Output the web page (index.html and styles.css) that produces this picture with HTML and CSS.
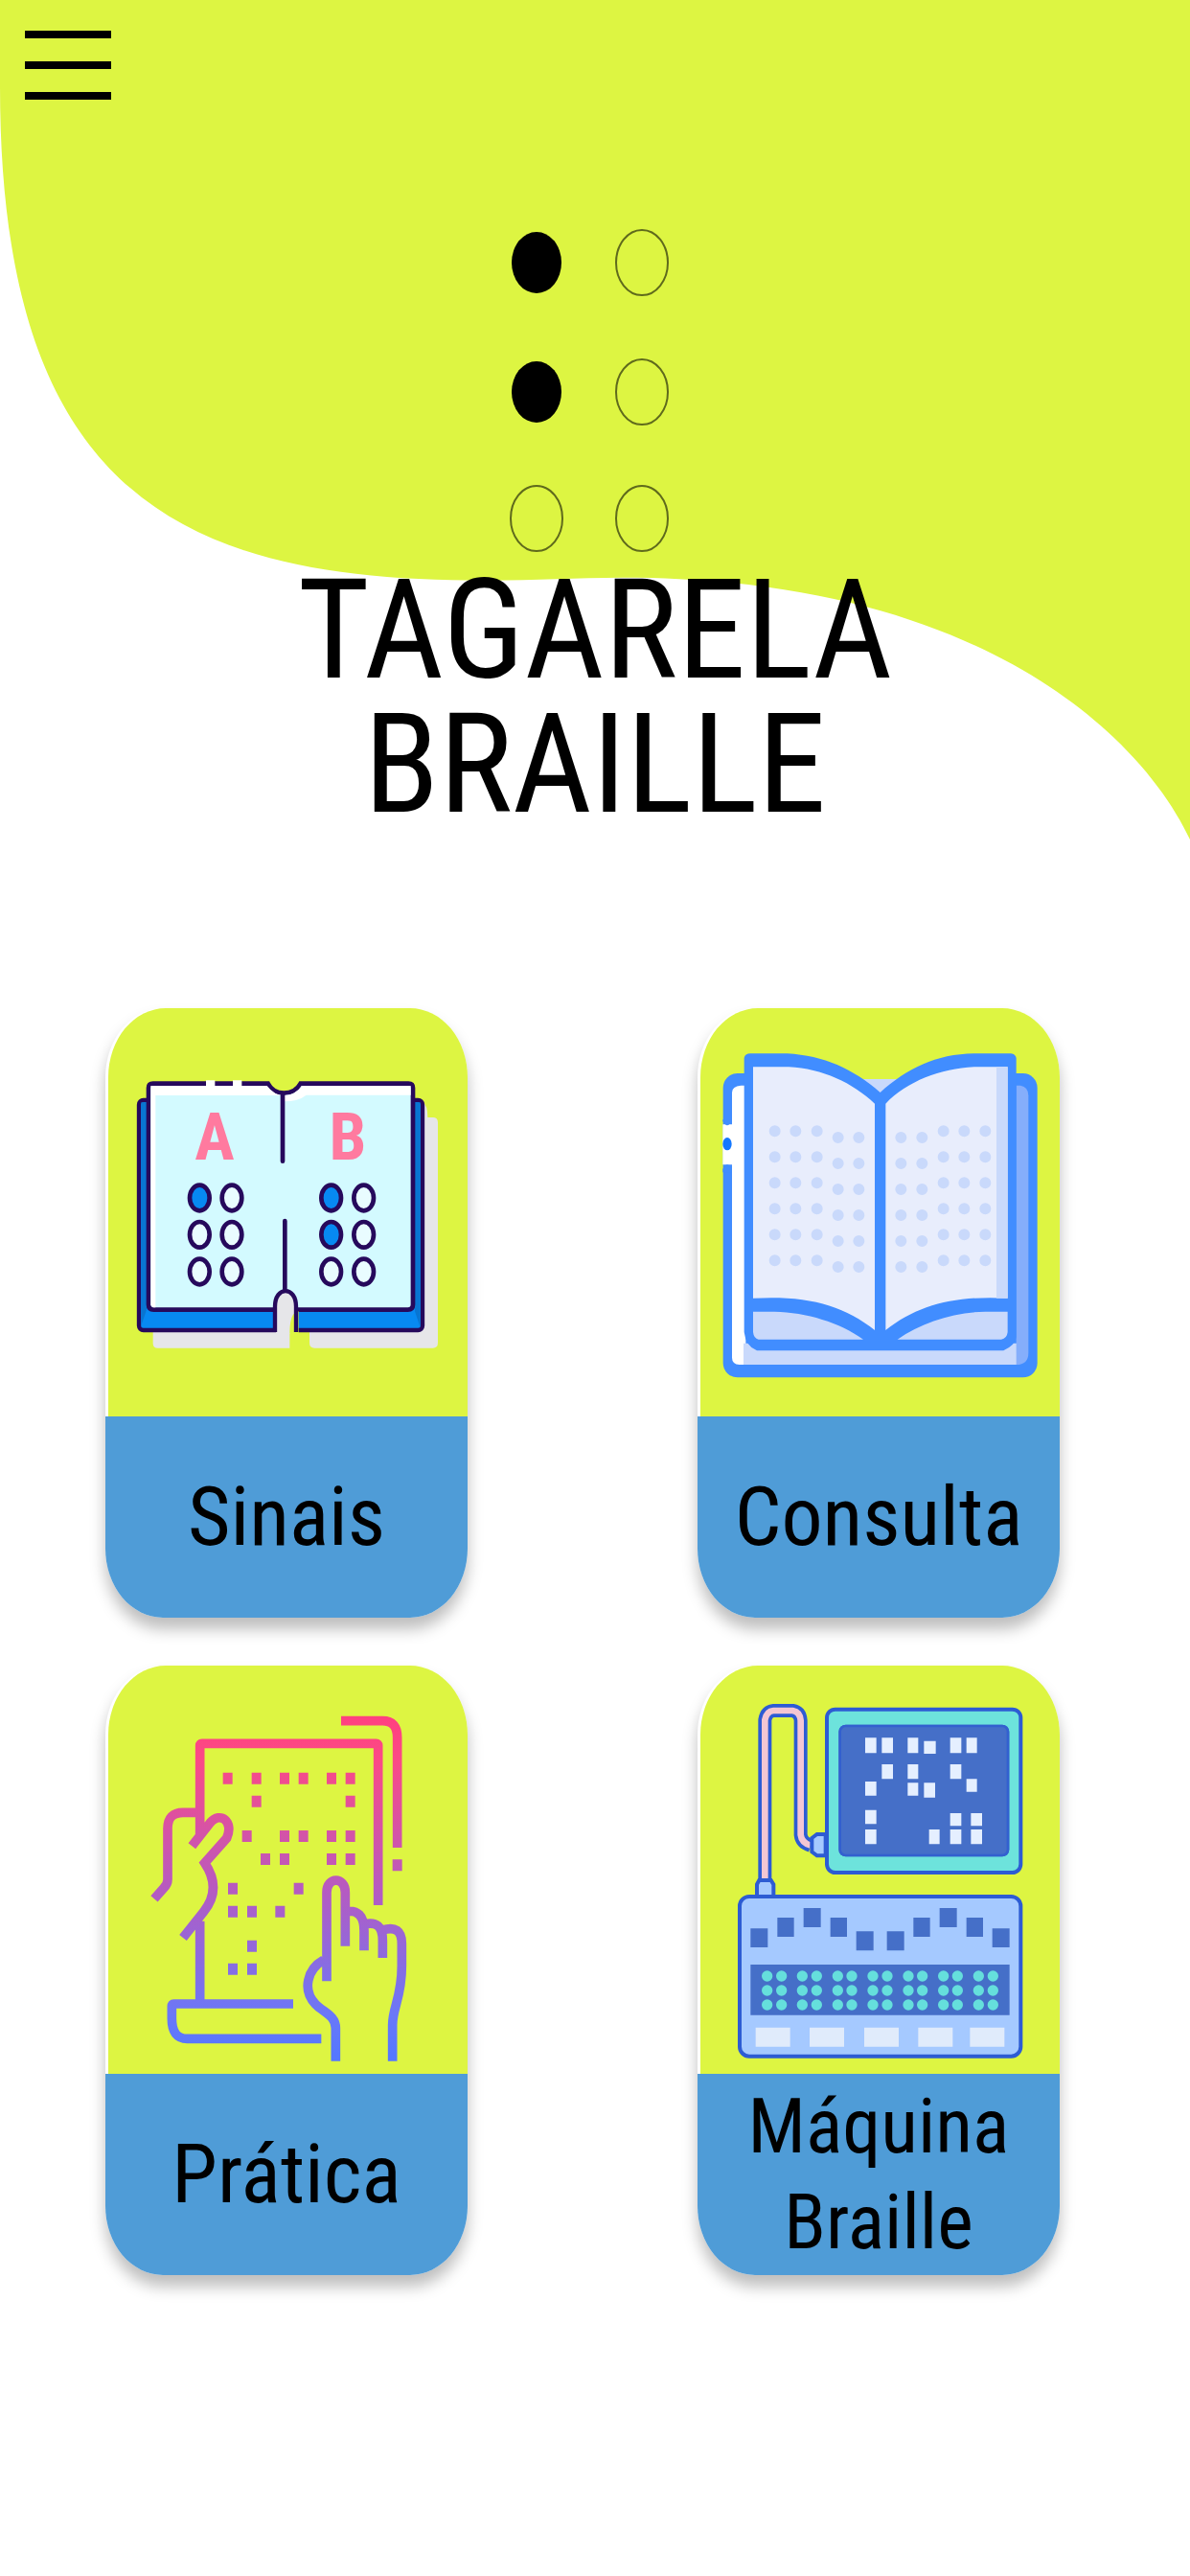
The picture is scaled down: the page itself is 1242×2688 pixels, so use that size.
FILE: index.html
```html
<!DOCTYPE html>
<html lang="pt-BR">
<head>
<meta charset="utf-8">
<meta name="viewport" content="width=device-width, initial-scale=1">
<title>Tagarela Braille</title>
<link rel="stylesheet" href="styles.css">
</head>
<body>
<header class="hero">
  <svg class="hero-shape" viewBox="0 0 1242 875" preserveAspectRatio="none" aria-hidden="true">
    <path fill="#ddf542" d="M0 0H1242V875C1190 765 1020 602 650 602C600 602 560 605 507 605C200 605 0 525 0 90Z"/>
  </svg>
  <div class="hero-content">
    <button class="menu" type="button" aria-label="Menu">
      <span class="menu-line"></span>
      <span class="menu-line"></span>
      <span class="menu-line"></span>
    </button>
    <svg class="cell" viewBox="0 0 166 338" aria-hidden="true">
      <g fill="#000"><ellipse cx="28" cy="36" rx="26" ry="32"/><ellipse cx="28" cy="171" rx="26" ry="32"/></g>
      <g fill="none" stroke="#5f6a1c" stroke-width="2"><ellipse cx="138" cy="36" rx="27" ry="34"/><ellipse cx="138" cy="171" rx="27" ry="34"/><ellipse cx="28" cy="303" rx="27" ry="34"/><ellipse cx="138" cy="303" rx="27" ry="34"/></g>
    </svg>
    <h1 class="title"><span class="title-line">TAGARELA</span> <span class="title-line">BRAILLE</span></h1>
  </div>
</header>
<main class="cards">
  <a class="card" href="#sinais">
    <span class="card-art">
      <svg viewBox="40 36 1125 1278" aria-hidden="true">
        <path fill="#e6e6e9" d="M180 1030H608V1100H195Q180 1100 180 1085ZM670 1030H1025V330Q1040 340 1040 378H1056Q1072 378 1072 394V1084Q1072 1100 1056 1100H686Q670 1100 670 1084Z"/>
        <rect x="136" y="324" width="888" height="720" rx="14" fill="#0789f2" stroke="#26095c" stroke-width="13"/>
        <path fill="#0875d2" d="M143 331H160V980L143 1030ZM1000 331H1017V1036L1000 985Z"/>
        <path fill="#d3faff" stroke="#26095c" stroke-width="14" d="M166 286Q166 272 180 272H540C560 312 620 312 642 272H980Q994 272 994 286V964Q994 980 978 980H182Q166 980 166 964Z"/>
        <path fill="#fff" d="M173 279H537Q560 309 590 309H188V973H180L173 965ZM590 309Q625 309 646 279H987V308H660Q635 328 590 328Z"/>
        <path fill="#fff" d="M346 262H374V285H346ZM430 262H458V285H430Z"/>
        <path fill="#ddf542" d="M565 1054V985H636V1054Z"/>
        <path fill="#e6e6e9" d="M565 1056V960C565 910 625 910 625 960V990Q608 1000 608 1056Z"/>
        <path fill="none" stroke="#26095c" stroke-width="13" d="M562 1050V970C562 905 628 905 628 970V1050"/>
        <path fill="none" stroke="#26095c" stroke-width="14" stroke-linecap="round" d="M586 305V515M593 702V915"/>
        <text class="book-letter" x="373" y="510">A</text>
        <text class="book-letter" x="790" y="510">B</text>
        <g fill="#e9fcff" stroke="#26095c" stroke-width="14">
          <ellipse cx="427" cy="630" rx="31" ry="40"/><ellipse cx="326" cy="745" rx="31" ry="40"/><ellipse cx="427" cy="745" rx="31" ry="40"/><ellipse cx="326" cy="861" rx="31" ry="40"/><ellipse cx="427" cy="861" rx="31" ry="40"/>
          <ellipse cx="840" cy="630" rx="31" ry="40"/><ellipse cx="840" cy="745" rx="31" ry="40"/><ellipse cx="738" cy="861" rx="31" ry="40"/><ellipse cx="840" cy="861" rx="31" ry="40"/>
        </g>
        <g fill="#0789f2" stroke="#26095c" stroke-width="14">
          <ellipse cx="326" cy="630" rx="31" ry="40"/><ellipse cx="738" cy="630" rx="31" ry="40"/><ellipse cx="738" cy="745" rx="31" ry="40"/>
        </g>
      </svg>
    </span>
    <span class="card-label">Sinais</span>
  </a>
  <a class="card" href="#consulta">
    <span class="card-art">
      <svg viewBox="33 36 1125 1278" aria-hidden="true">
        <rect x="104" y="240" width="984" height="952" rx="45" fill="#418dff"/>
        <path fill="#fff" d="M132 300Q132 280 160 278H175V1152H155Q132 1150 132 1130ZM103 400H132V526H103Z"/>
        <path fill="#418dff" d="M103 385H131V390Q117 415 103 390ZM103 540Q117 512 131 540V550H103Z"/>
        <ellipse cx="117" cy="461" rx="14" ry="20" fill="#1478ff"/>
        <path fill="#c9d9fb" d="M168 1085H1025V1152H168Z"/>
        <path fill="#85aefb" d="M1022 278H1035Q1060 282 1060 310V1115Q1060 1152 1022 1152Z"/>
        <path fill="#c9d9fb" d="M540 258H655V310H540Z"/>
        <path fill="#ddf542" d="M190 170H1000V258H190Z"/>
        <path fill="#418dff" d="M170 192Q172 178 190 178H305C420 185 510 225 596 300C680 225 770 180 890 178H1005Q1020 180 1022 192V1065Q1020 1090 982 1108H210Q175 1095 170 1050Z"/>
        <path fill="#e8edfc" d="M198 220H310C415 225 510 270 579 335V1044C480 965 370 935 198 944ZM995 220H890C785 225 680 265 613 335V1044C715 965 830 935 995 944Z"/>
        <path fill="#c9d9fb" d="M960 220H995V944H960ZM198 986H265C365 988 470 1020 543 1073H215Q200 1070 198 1050ZM995 986H925C825 988 725 1020 650 1073H975Q993 1070 995 1050Z"/>
        <g fill="none" stroke="#c9d9fb" stroke-width="36" stroke-linecap="round" stroke-dasharray="0 81">
          <path d="M266 421V835M331 421V835M398 421V835M464 441V855M529 441V855M661 441V855M727 441V855M794 421V835M859 421V835M925 421V835"/>
        </g>
      </svg>
    </span>
    <span class="card-label">Consulta</span>
  </a>
  <a class="card" href="#pratica">
    <span class="card-art">
      <svg viewBox="31 20 1125 1278" aria-hidden="true">
        <defs>
          <linearGradient id="ink" gradientUnits="userSpaceOnUse" x1="0" y1="190" x2="0" y2="1240">
            <stop offset="0" stop-color="#ff4180"/><stop offset=".12" stop-color="#fb4a86"/><stop offset=".5" stop-color="#b75ac0"/><stop offset=".88" stop-color="#6a78f8"/><stop offset="1" stop-color="#5577ff"/>
          </linearGradient>
        </defs>
        <path fill="none" stroke="url(#ink)" stroke-width="29" d="M760 193H890Q936 193 936 245V590M318 555V270Q318 264 324 264H870Q876 264 876 270V770M318 1080V820M305 480H265Q217 480 217 530V690Q217 704 205 716L175 750M293 585L350 512C382 475 425 508 402 560L333 638C368 690 370 740 330 790L265 872M610 1079H236Q230 1079 230 1086V1125Q230 1188 278 1188H698M715 1008V730C715 680 773 680 773 730V898M773 790Q832 780 832 850V912M832 830Q890 815 890 880V935M890 848Q950 830 950 890V960C950 1060 921 1090 921 1145V1258M705 942C655 970 637 1035 680 1080C705 1106 743 1115 743 1155V1258"/>
        <path fill="url(#ink)" d="M390 355h30v36h-30zM480 355h30v36h-30zM568 355h30v36h-30zM627 355h30v36h-30zM715 355h30v36h-30zM774 355h30v36h-30zM480 427h30v36h-30zM774 427h30v36h-30zM450 536h30v36h-30zM568 536h30v36h-30zM627 536h30v36h-30zM715 536h30v36h-30zM774 536h30v36h-30zM508 608h30v36h-30zM568 608h30v36h-30zM715 608h30v36h-30zM774 608h30v36h-30zM921 627h30v36h-30zM406 700h30v36h-30zM612 700h30v36h-30zM406 772h30v36h-30zM466 772h30v36h-30zM554 772h30v36h-30zM466 880h30v36h-30zM406 952h30v36h-30zM466 952h30v36h-30z"/>
      </svg>
    </span>
    <span class="card-label">Prática</span>
  </a>
  <a class="card" href="#maquina">
    <span class="card-art">
      <svg viewBox="33 20 1125 1278" aria-hidden="true">
        <g fill="none" stroke-linejoin="round">
          <path stroke="#2d5cd3" stroke-width="42" d="M235 690V190Q240 163 262 161H322Q345 165 347 192V550Q350 575 378 583"/>
          <path stroke="#f4c6d3" stroke-width="20" d="M235 690V190Q240 163 262 161H322Q345 165 347 192V550Q350 575 378 583"/>
        </g>
        <g fill="#a5c9ff" stroke="#2d5cd3" stroke-width="12">
          <path d="M382 560L398 548H425V615H398L382 603Z"/>
          <path d="M217 692H254L262 705V745H210V705Z"/>
          <rect x="156" y="743" width="880" height="500" rx="30"/>
        </g>
        <rect x="429" y="157" width="607" height="511" rx="26" fill="#6de3dc" stroke="#2d5cd3" stroke-width="12"/>
        <rect x="466" y="205" width="534" height="413" rx="22" fill="#456fc8"/>
        <rect x="470" y="209" width="526" height="405" rx="18" fill="none" stroke="#3360cf" stroke-width="8"/>
        <path fill="#e5efff" d="M549 246h35v48h-35zM601 246h35v48h-35zM682 246h33v48h-33zM733 256h37v40h-37zM815 246h35v48h-35zM866 246h33v48h-33zM601 329h35v46h-35zM682 329h33v46h-33zM815 329h35v46h-35zM866 375h33v40h-33zM549 383h35v44h-35zM682 387h33v40h-33zM733 387h35v46h-35zM549 472h35v44h-35zM549 533h35v46h-35zM749 533h33v46h-33zM815 482h35v40h-35zM880 482h35v40h-35zM815 533h35v46h-35zM880 533h35v46h-35z"/>
        <path fill="#456fc8" d="M190 843h54v59h-54zM274 809h52v60h-52zM356 779h54v60h-54zM440 809h52v60h-52zM521 852h54v60h-54zM617 852h54v60h-54zM700 809h52v60h-52zM782 779h54v60h-54zM866 809h52v60h-52zM947 843h54v59h-54zM190 956h811v158H190z"/>
        <g fill="none" stroke="#65dfdc" stroke-width="34" stroke-linecap="round" stroke-dasharray="0 45">
          <path d="M242 992V1086M287 992V1086M352 992V1086M397 992V1086M463 992V1086M507 992V1086M573 992V1086M618 992V1086M684 992V1086M728 992V1086M794 992V1086M838 992V1086M904 992V1086M949 992V1086"/>
        </g>
        <path fill="#e0ebfb" d="M206 1153h108v60h-108zM375 1153h108v60h-108zM546 1153h108v60h-108zM715 1153h108v60h-108zM877 1153h108v60h-108z"/>
      </svg>
    </span>
    <span class="card-label card-label-long">Máquina Braille</span>
  </a>
</main>
</body>
</html>
```
FILE: styles.css
```css
* {
  box-sizing: border-box;
}

body {
  margin: 0;
  background: #fff;
  color: #000;
  font-family: "Roboto Condensed", "PT Sans", Roboto, sans-serif;
}

/* The green shape and the content share one grid cell. */
.hero {
  display: grid;
}

.hero-shape,
.hero-content {
  grid-area: 1 / 1;
}

.hero-shape {
  display: block;
  width: 100%;
  height: 876px;
}

.hero-content {
  display: flex;
  flex-direction: column;
  align-items: center;
}

.menu {
  display: flex;
  flex-direction: column;
  align-self: flex-start;
  gap: 24px;
  margin: 16px 0 0 10px;
  padding: 16px;
  border: 0;
  background: none;
  cursor: pointer;
}

.menu-line {
  width: 90px;
  height: 8px;
  background: #000;
}

.cell {
  display: block;
  width: 166px;
  height: 338px;
  margin: 118px 12px 0 0;
}

.title {
  margin: 12px 0 0;
  font-size: 144px;
  font-weight: 400;
  line-height: 140px;
  text-align: center;
}

.title-line {
  display: block;
}

.cards {
  display: grid;
  grid-template-columns: repeat(2, minmax(0, 1fr));
  gap: 50px 240px;
  padding: 176px 136px 64px 110px;
}

.card {
  display: flex;
  flex-direction: column;
  border-radius: 60px / 72px;
  box-shadow: 0 12px 16px rgba(0, 0, 0, 0.26);
  color: inherit;
  text-decoration: none;
}

.card-art {
  margin-left: 3px;
  border-radius: 60px 60px 0 0 / 72px 72px 0 0;
  background: #ddf542;
}

.card-art svg {
  display: block;
  width: 100%;
}

.card-label {
  display: flex;
  align-items: center;
  justify-content: center;
  min-height: 210px;
  padding: 0 24px;
  border-radius: 0 0 60px 60px / 0 0 72px 72px;
  background: #4f9cd7;
  font-size: 86px;
  line-height: 100px;
  text-align: center;
}

.card-label-long {
  font-size: 80px;
}

.book-letter {
  fill: #ff7a9f;
  font-size: 208px;
  font-weight: 700;
  text-anchor: middle;
}
```
